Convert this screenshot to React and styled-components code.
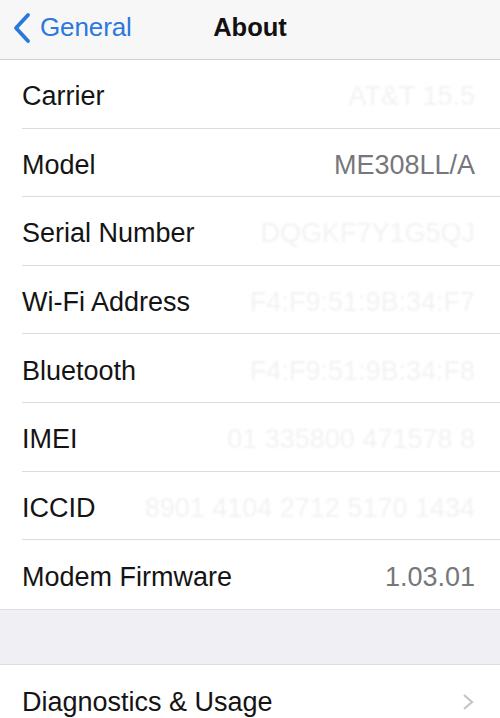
import React from 'react';
import styled, { createGlobalStyle } from 'styled-components';

const GlobalStyle = createGlobalStyle`
	html, body {
		margin: 0;
		padding: 0;
		background: #ffffff;
		font-family: "Liberation Sans", Arial, sans-serif;
		-webkit-font-smoothing: antialiased;
	}
`;

const Screen = styled.div`
	width: 500px;
	height: 718px;
	overflow: hidden;
	background: #ffffff;
	display: flex;
	flex-direction: column;
`;

const NavBar = styled.div`
	height: 60px;
	flex-shrink: 0;
	background: #f7f7f7;
	border-bottom: 1px solid #d2d2d6;
	display: grid;
	grid-template-columns: 1fr auto 1fr;
	align-items: center;
	box-sizing: border-box;
`;

const BackButton = styled.div`
	display: flex;
	align-items: center;
	gap: 8px;
	padding-left: 12px;
	color: #2b78de;
	font-size: 26px;
	letter-spacing: -0.1px;
	padding-bottom: 4px;
`;

const Title = styled.div`
	font-size: 25.5px;
	font-weight: bold;
	color: #111111;
	padding-bottom: 4px;
`;

const Group = styled.div`
	background: #ffffff;
	display: flex;
	flex-direction: column;
`;

const Row = styled.div`
	height: 68.6px;
	flex-shrink: 0;
	display: flex;
	align-items: center;
	justify-content: space-between;
	margin-left: 22px;
	padding-right: 25px;
	padding-top: 6px;
	box-sizing: border-box;
	border-bottom: ${(p) => (p.$last ? 'none' : '1px solid #dcdcdf')};
`;

const Label = styled.span`
	font-size: 27px;
	color: #141414;
`;

const Value = styled.span`
	font-size: 27px;
	color: ${(p) => (p.$hidden ? '#f2f2f2' : '#77777b')};
	filter: ${(p) => (p.$hidden ? 'blur(1px)' : 'none')};
`;

const Spacer = styled.div`
	height: 56px;
	flex-shrink: 0;
	background: #efeff4;
	border-top: 1px solid #dedee2;
	border-bottom: 1px solid #dedee2;
	box-sizing: border-box;
`;

const Chevron = () => (
	<svg width="14" height="18" viewBox="0 0 14 18">
		<path d="M3 2 L11 9 L3 16" fill="none" stroke="#c4c4c9" strokeWidth="2.2" />
	</svg>
);

const BackIcon = () => (
	<svg width="20" height="32" viewBox="0 0 20 32">
		<path d="M16 3 L4 16 L16 29" fill="none" stroke="#2a77de" strokeWidth="3.8" strokeLinecap="round" strokeLinejoin="round" />
	</svg>
);

const rows = [
	{ label: 'Carrier', value: 'AT&T 15.5', hidden: true },
	{ label: 'Model', value: 'ME308LL/A' },
	{ label: 'Serial Number', value: 'DQGKF7Y1G5QJ', hidden: true },
	{ label: 'Wi-Fi Address', value: 'F4:F9:51:9B:34:F7', hidden: true },
	{ label: 'Bluetooth', value: 'F4:F9:51:9B:34:F8', hidden: true },
	{ label: 'IMEI', value: '01 335800 471578 8', hidden: true },
	{ label: 'ICCID', value: '8901 4104 2712 5170 1434', hidden: true },
	{ label: 'Modem Firmware', value: '1.03.01' },
];

export default function App() {
	return (
		<Screen>
			<GlobalStyle />
			<NavBar>
				<BackButton>
					<BackIcon />
					General
				</BackButton>
				<Title>About</Title>
				<div />
			</NavBar>
			<Group>
				{rows.map((r, i) => (
					<Row key={r.label} $last={i === rows.length - 1}>
						<Label>{r.label}</Label>
						<Value $hidden={r.hidden}>{r.value}</Value>
					</Row>
				))}
			</Group>
			<Spacer />
			<Group>
				<Row $last>
					<Label>Diagnostics &amp; Usage</Label>
					<Chevron />
				</Row>
			</Group>
		</Screen>
	);
}
